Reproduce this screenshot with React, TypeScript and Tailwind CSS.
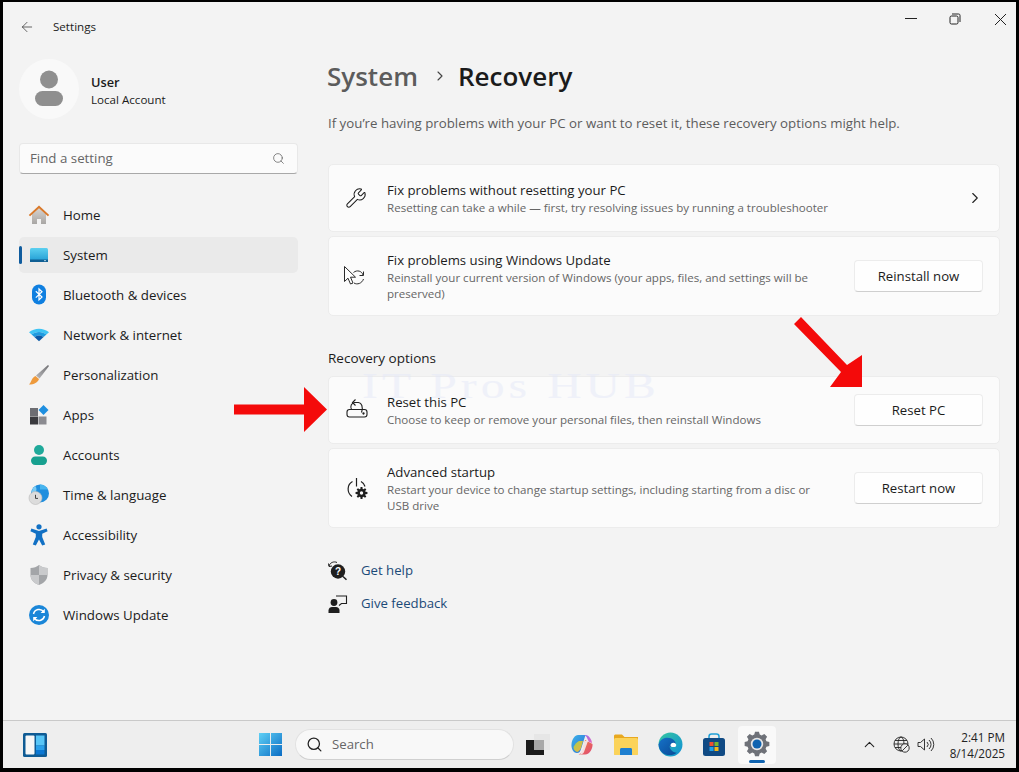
import React from "react";
import { ChevronRight, Wrench, ArrowLeft, Search, ChevronUp } from "lucide-react";

function gearPath(cx: number, cy: number, ro: number, ri: number, teeth: number) {
  const pts: string[] = [];
  const step = (Math.PI * 2) / teeth;
  for (let i = 0; i < teeth; i++) {
    const a = i * step - Math.PI / 2;
    const list: [number, number][] = [
      [ri, a - step * 0.36],
      [ro, a - step * 0.2],
      [ro, a + step * 0.2],
      [ri, a + step * 0.36],
    ];
    for (const [r, t] of list) pts.push(`${(cx + r * Math.cos(t)).toFixed(2)} ${(cy + r * Math.sin(t)).toFixed(2)}`);
  }
  return "M" + pts.join("L") + "Z";
}

const HomeIcon = () => (
  <svg width="22" height="22" viewBox="0 0 22 22">
    <defs><linearGradient id="hb" x1="0" y1="0" x2="0" y2="1"><stop offset="0" stopColor="#d8d4d0" /><stop offset="1" stopColor="#a8a6a4" /></linearGradient></defs>
    <path d="M4 10 11 4l7 6v10h-5v-5H9v5H4Z" fill="url(#hb)" />
    <path d="M0.8 11 11 1.500 21.200 11l-1.300 1.200L11 4.200 2.100 12.200Z" fill="#d9792a" />
  </svg>
);
const SystemIcon = () => (
  <svg width="22" height="22" viewBox="0 0 22 22">
    <defs><linearGradient id="sy" x1="0" y1="0" x2="0" y2="1"><stop offset="0" stopColor="#5cd0f0" /><stop offset="1" stopColor="#1e9ad2" /></linearGradient></defs>
    <rect x="2" y="4" width="18" height="14" rx="1.500" fill="url(#sy)" />
    <rect x="2" y="15.500" width="18" height="2.500" fill="#0f5f94" />
    <rect x="16" y="16.300" width="2" height="0.800" fill="#cfe8f5" />
  </svg>
);
const BluetoothIcon = () => (
  <svg width="22" height="22" viewBox="0 0 22 22">
    <rect x="4" y="0.500" width="14" height="20" rx="7" fill="#0f7fe0" />
    <path d="M7.800 7.200 14 13l-3 2.900V5l3 2.800L7.800 13.600" fill="none" stroke="#fff" strokeWidth="1.200" />
  </svg>
);
const WifiIcon = () => (
  <svg width="22" height="22" viewBox="0 0 22 22">
    <path d="M1 8.300C6.500 3.600 15.500 3.600 21 8.300L18.400 10.600C14.200 7.200 7.800 7.200 3.600 10.600Z" fill="#3ec4f4" />
    <path d="M3.600 10.600C7.800 7.200 14.200 7.200 18.400 10.600L15.600 13.100C13 11 9 11 6.400 13.100Z" fill="#1e9be0" />
    <path d="M6.400 13.100C9 11 13 11 15.600 13.100L11 17.200Z" fill="#0b5aa8" />
  </svg>
);
const BrushIcon = () => (
  <svg width="22" height="22" viewBox="0 0 22 22">
    <defs><linearGradient id="br" x1="1" y1="0" x2="0" y2="1"><stop offset="0" stopColor="#6f6f72" /><stop offset="1" stopColor="#b9b9bc" /></linearGradient></defs>
    <path d="M20 1 21 2 11.500 14.500 8 11.500Z" fill="url(#br)" />
    <path d="M7.500 12 11 15C10 18.500 6 20.500 1 20.500 3.500 18.500 3.500 13.500 7.500 12Z" fill="#ee9a3c" />
  </svg>
);
const AppsIcon = () => (
  <svg width="22" height="22" viewBox="0 0 22 22">
    <rect x="2" y="4" width="8" height="8" fill="#6d6d72" />
    <rect x="2" y="12.500" width="8" height="8" fill="#3a3a3e" />
    <rect x="10.500" y="12.500" width="8" height="8" fill="#8b8b90" />
    <path d="M15.500 1 20.500 6 15.500 11 10.500 6Z" fill="#1e8fe0" />
  </svg>
);
const AccountsIcon = () => (
  <svg width="22" height="22" viewBox="0 0 22 22">
    <circle cx="11" cy="6" r="5" fill="#1fa99a" />
    <rect x="3" y="12.500" width="16" height="8.500" rx="4.200" fill="#17a08f" />
  </svg>
);
const TimeIcon = () => (
  <svg width="22" height="22" viewBox="0 0 22 22">
    <circle cx="12" cy="9.500" r="9" fill="#1f8ede" />
    <path d="M12 .5a9 9 0 0 1 8 5h-8Z" fill="#47b4ee" />
    <path d="M7 1.800C9 4 9 7 7 9l-3 1A9 9 0 0 1 7 1.800Z" fill="#7ccbf2" />
    <circle cx="7.500" cy="14" r="6.500" fill="#dcdcdc" stroke="#b8b8b8" strokeWidth=".6" />
    <path d="M7.500 10.800V14.400H10" fill="none" stroke="#444" strokeWidth="1" />
  </svg>
);
const AccessIcon = () => (
  <svg width="22" height="22" viewBox="0 0 22 22">
    <circle cx="11" cy="2.800" r="2.600" fill="#1170c4" />
    <path d="M3.400 4.600 11 7l7.600-2.400 1 2.600-5.400 2.600V13l3 7.400-3 1.200L11 15.500l-3.200 6.100-3-1.200 3-7.400V9.800L2.400 7.200Z" fill="#1170c4" />
  </svg>
);
const ShieldIcon = () => (
  <svg width="22" height="22" viewBox="0 0 22 22">
    <path d="M11 1C8.500 3 6 4 2.500 4V11C2.500 16 6.500 19.500 11 21 15.500 19.500 19.500 16 19.500 11V4C16 4 13.500 3 11 1Z" fill="#a3a5a8" />
    <path d="M11 1C13.500 3 16 4 19.500 4V11H11ZM11 11H2.500C2.500 16 6.500 19.500 11 21Z" fill="#c9cacc" />
  </svg>
);
const UpdateIcon = () => (
  <svg width="22" height="22" viewBox="0 0 22 22">
    <circle cx="11" cy="11" r="10" fill="#1a86d8" />
    <path d="M5.500 10A5.700 5.700 0 0 1 15.700 7.800M16.500 12A5.700 5.700 0 0 1 6.300 14.200" fill="none" stroke="#fff" strokeWidth="1.500" />
    <path d="M16.800 4.800V9h-4.200ZM5.200 17.200V13h4.200Z" fill="#fff" />
  </svg>
);

const nav: [string, React.FC][] = [
  ["Home", HomeIcon],
  ["System", SystemIcon],
  ["Bluetooth & devices", BluetoothIcon],
  ["Network & internet", WifiIcon],
  ["Personalization", BrushIcon],
  ["Apps", AppsIcon],
  ["Accounts", AccountsIcon],
  ["Time & language", TimeIcon],
  ["Accessibility", AccessIcon],
  ["Privacy & security", ShieldIcon],
  ["Windows Update", UpdateIcon],
];

const CursorRefresh = () => (
  <svg className="-ml-[3px]" width="24" height="24" viewBox="0 0 24 24" fill="none" stroke="#2b2b2b" strokeWidth="1">
    <path d="M2.500 2.500V17.500L6 14.200 8.500 20 11 19 8.500 13.200H13.500Z" fill="#fff" />
    <path d="M11.500 8.500C15 5.500 20 7 21 11M21.500 15C20 19.500 15 21 12 19" />
    <path d="M21.500 7.500V11.500H17.500" />
  </svg>
);
const ResetIcon = () => (
  <svg width="24" height="24" viewBox="0 0 24 24" fill="none" stroke="#1f1f1f" strokeWidth="1.100">
    <path d="M2 14C2 12.500 3 11.500 4.500 11.500H19.500C21 11.500 22 12.500 22 14V16.500C22 18 21 19 19.500 19H4.500C3 19 2 18 2 16.500Z" />
    <path d="M6.500 11.500C4.800 8.500 6.500 5 9.500 4.500H13.500C16.500 5 18.500 8.500 16.500 14.500" />
    <path d="M10.500 1.500 7.500 4.500l3 3" />
    <circle cx="18.500" cy="15.500" r=".6" fill="#1f1f1f" />
  </svg>
);
const StartupIcon = () => (
  <svg width="24" height="24" viewBox="0 0 24 24" fill="none" stroke="#1f1f1f" strokeWidth="1.200">
    <path d="M7.500 5.500C2 8.500 1.500 16.500 7 20.500" />
    <path d="M16 5.500C18 6.500 19.500 8.500 20 10.500" />
    <path d="M11.500 2V10.500" />
    <path d={gearPath(16.500, 17, 6, 4.200, 8)} fill="#1f1f1f" stroke="none" />
    <circle cx="16.500" cy="17" r="1.700" fill="#fbfbfb" stroke="none" />
  </svg>
);
const HelpIcon = () => (
  <svg width="20" height="20" viewBox="0 0 20 20">
    <path d="M1 5C2 1.500 6 0 9 1.500M1 5.500 .5 2.500M1 5.500 4 5" fill="none" stroke="#1f1f1f" strokeWidth="1" />
    <circle cx="10" cy="10.500" r="7.200" fill="#1f1f1f" />
    <path d="M15 15.500 18.500 18.800" stroke="#1f1f1f" strokeWidth="1.500" />
    <text x="10" y="14" textAnchor="middle" fontSize="10" fontWeight="700" fill="#fff" fontFamily="'Liberation Sans', sans-serif">?</text>
  </svg>
);
const FeedbackIcon = () => (
  <svg width="20" height="20" viewBox="0 0 20 20">
    <circle cx="6" cy="8.500" r="3.400" fill="#1f1f1f" />
    <path d="M0.500 19V16.500C0.500 14 2.500 13 4 13H8C10 13 11.500 14.500 11.500 16.500V19Z" fill="#1f1f1f" />
    <path d="M8 2H18.500V9.500H13.500L11 11.500" fill="none" stroke="#1f1f1f" strokeWidth="1.100" />
  </svg>
);

const Card = ({ h, icon, title, desc, right }: { h: string; icon: React.ReactNode; title: string; desc: React.ReactNode; right: React.ReactNode }) => (
  <div className={`${h} flex items-center rounded-[5px] border border-[#ececec] bg-[#fbfbfb] pl-[16px] pr-[16px]`}>
    <div className="flex w-[42px] shrink-0 items-center">{icon}</div>
    <div className="min-w-0 flex-1 pt-[1px]">
      <div className="text-[13.200px] leading-[19px] text-[#1b1b1b]">{title}</div>
      <div className="text-[11.570px] leading-[16px] text-[#666666]">{desc}</div>
    </div>
    {right}
  </div>
);

const Btn = ({ label }: { label: string }) => (
  <div className="ml-[12px] flex h-[32px] w-[129px] shrink-0 items-center justify-center rounded-[4px] border border-[#ececec] border-b-[#cfcfcf] bg-[#fefefe] pt-[2px] text-[13.200px] text-[#1b1b1b]">{label}</div>
);

const TaskSlot = ({ children, cls = "" }: { children: React.ReactNode; cls?: string }) => (
  <div className={`flex h-[38px] w-[44px] shrink-0 items-center justify-center ${cls}`}>{children}</div>
);

export default function App() {
  return (
    <div className="relative flex h-[772px] w-[1019px] flex-col overflow-hidden bg-black pb-[4px] pl-[3px] pr-[3px] pt-[2px] text-[#1b1b1b]" style={{ fontFamily: '"Open Sans", "Noto Sans", sans-serif' }}>
      <div className="flex min-h-0 flex-1 flex-col bg-[#f3f3f3]">
        {/* title bar */}
        <div className="flex h-[50px] shrink-0 items-center pl-[16px] pr-[9px]">
          <ArrowLeft size={16} strokeWidth={1.100} className="text-[#333]" />
          <span className="ml-[18px] text-[11.600px] text-[#222]">Settings</span>
          <div className="ml-auto flex items-center gap-[33px] pb-[16px]">
            <svg className="-mr-[1px]" width="12" height="12" viewBox="0 0 12 12"><path d="M0 5.500H12" stroke="#222" strokeWidth="1" /></svg>
            <svg width="12" height="12" viewBox="0 0 12 12" fill="none" stroke="#222" strokeWidth="1"><rect x="1" y="3" width="8" height="8" rx="1.500" /><path d="M3 1H9.500C10.500 1 11 1.500 11 2.500V9" /></svg>
            <svg width="13" height="13" viewBox="0 0 13 13"><path d="M1 1 12 12M12 1 1 12" stroke="#222" strokeWidth="1" /></svg>
          </div>
        </div>

        <div className="flex min-h-0 flex-1">
          {/* sidebar */}
          <div className="w-[325px] shrink-0 pl-[16px] pr-[30px]">
            <div className="mt-[7px] flex items-center">
              <div className="flex h-[60px] w-[60px] flex-col items-center justify-center rounded-full bg-[#f9f9f9]">
                <svg width="30" height="38" viewBox="0 0 30 38"><circle cx="15" cy="9.500" r="9" fill="#8f8f8f" /><rect x="1" y="21" width="28" height="15" rx="7.500" fill="#8f8f8f" /></svg>
              </div>
              <div className="ml-[12px] pt-[3px]">
                <div className="text-[12.800px] font-semibold leading-[18px] text-[#1b1b1b]">User</div>
                <div className="text-[11.600px] leading-[18px] text-[#1b1b1b]">Local Account</div>
              </div>
            </div>
            <div className="mt-[24px] flex h-[31px] items-center justify-between rounded-[4px] border border-[#e8e8e8] border-b-[#a8a8a8] bg-[#fbfbfb] pl-[10px] pr-[12px] text-[13.300px] text-[#666]">
              <span>Find a setting</span>
              <Search size={13} strokeWidth={1.300} className="text-[#555]" />
            </div>
            <div className="mt-[23px] flex flex-col gap-[4px]">
              {nav.map(([label, Icon]) => {
                const active = label === "System";
                return (
                  <div key={label} className={`relative flex h-[36px] items-center rounded-[5px] pl-[9px] text-[13.300px] text-[#1b1b1b] ${active ? "bg-[#eaeaea]" : ""}`}>
                    {active && <span className="absolute left-0 top-[9px] h-[18px] w-[3px] rounded-full bg-[#0f5c9e]" />}
                    <Icon />
                    <span className="ml-[13px] pt-[2px]">{label}</span>
                  </div>
                );
              })}
            </div>
          </div>

          {/* main */}
          <div className="min-w-0 flex-1 pr-[16px]">
            <div className="flex h-[50px] items-center pb-[2px] text-[26px] font-semibold">
              <span className="-ml-[1px] text-[#5c5c5c]">System</span>
              <ChevronRight size={16} strokeWidth={1.700} className="ml-[14px] mr-[10px] text-[#444]" />
              <span className="text-[#1b1b1b]">Recovery</span>
            </div>
            <div className="mt-[11px] h-[20px] text-[13.280px] leading-[20px] text-[#5c5c5c]">If you’re having problems with your PC or want to reset it, these recovery options might help.</div>
            <div className="mt-[31px] flex flex-col gap-[4px]">
              <Card h="h-[68px]" icon={<Wrench size={22} strokeWidth={1.100} />} title="Fix problems without resetting your PC" desc="Resetting can take a while — first, try resolving issues by running a troubleshooter" right={<ChevronRight size={18} strokeWidth={1.500} className="-mr-[1px] text-[#222]" />} />
              <Card h="h-[80px]" icon={<CursorRefresh />} title="Fix problems using Windows Update" desc={<>Reinstall your current version of Windows (your apps, files, and settings will be<br />preserved)</>} right={<Btn label="Reinstall now" />} />
            </div>
            <div className="mt-[32px] h-[20px] text-[13.500px] font-medium leading-[20px]">Recovery options</div>
            <div className="mt-[8px] flex flex-col gap-[4px]">
              <Card h="h-[68px]" icon={<ResetIcon />} title="Reset this PC" desc="Choose to keep or remove your personal files, then reinstall Windows" right={<Btn label="Reset PC" />} />
              <Card h="h-[80px]" icon={<StartupIcon />} title="Advanced startup" desc={<>Restart your device to change startup settings, including starting from a disc or<br />USB drive</>} right={<Btn label="Restart now" />} />
            </div>
            <div className="mt-[33px] flex flex-col gap-[13px]">
              <div className="flex h-[20px] items-center text-[13.200px] text-[#1b4a78]"><HelpIcon /><span className="ml-[13px]">Get help</span></div>
              <div className="flex h-[20px] items-center text-[13.200px] text-[#1b4a78]"><FeedbackIcon /><span className="ml-[13px]">Give feedback</span></div>
            </div>
          </div>
        </div>
      </div>

      {/* taskbar */}
      <div className="flex h-[48px] shrink-0 items-center border-t border-[#c9c9c9] bg-[#eeeeee]">
        <svg className="ml-[20px]" width="24" height="24" viewBox="0 0 24 24">
          <rect width="24" height="24" rx="1.500" fill="#0f5b94" />
          <rect x="2.500" y="2.500" width="9" height="19" rx="1" fill="#f7f7f7" />
          <rect x="13" y="2.500" width="8.500" height="10" fill="#58c6f7" />
          <rect x="13" y="12.500" width="8.500" height="4.500" fill="#2aa0ea" />
          <rect x="13" y="17" width="8.500" height="4.500" fill="#0b78d4" />
        </svg>
        <svg className="ml-[212px]" width="23" height="23" viewBox="0 0 24 24">
          <defs><linearGradient id="wn" x1="0" y1="0" x2="1" y2="1"><stop offset="0" stopColor="#5fd0f5" /><stop offset="1" stopColor="#0a6cc4" /></linearGradient></defs>
          <path d="M0 0H11.500V11.500H0ZM12.500 0H24V11.500H12.500ZM0 12.500H11.500V24H0ZM12.500 12.500H24V24H12.500Z" fill="url(#wn)" />
        </svg>
        <div className="ml-[13px] flex h-[31px] w-[219px] items-center rounded-full border border-[#e2e2e2] border-b-[#d0d0d0] bg-[#f8f8f8] pl-[10px] text-[13.200px] text-[#666]">
          <Search size={17} strokeWidth={1.800} className="text-[#222]" />
          <span className="ml-[9px]">Search</span>
        </div>
        <div className="flex items-center">
          <TaskSlot cls="ml-[1px]">
            <svg width="26" height="24" viewBox="0 0 26 24">
              <rect x="2" y="7" width="18" height="15" fill="#1c1c1c" />
              <rect x="10" y="1" width="16" height="16" fill="#e6e6e6" />
              <rect x="10" y="7" width="10" height="10" fill="#a8a8a8" />
            </svg>
          </TaskSlot>
          <TaskSlot cls="ml-[1px]">
            <svg width="24" height="24" viewBox="0 0 24 24">
              <defs>
                <linearGradient id="c1" x1="0" y1="0" x2="1" y2="1"><stop offset="0" stopColor="#3db4e8" /><stop offset="1" stopColor="#2a6fd8" /></linearGradient>
                <linearGradient id="c2" x1="0" y1="0" x2="1" y2="1"><stop offset="0" stopColor="#8a6cf0" /><stop offset="1" stopColor="#e86ac0" /></linearGradient>
                <linearGradient id="c3" x1="0" y1="0" x2="1" y2="1"><stop offset="0" stopColor="#a8cf50" /><stop offset="1" stopColor="#f0b040" /></linearGradient>
                <linearGradient id="c4" x1="0" y1="0" x2="1" y2="1"><stop offset="0" stopColor="#f08040" /><stop offset="1" stopColor="#e04a78" /></linearGradient>
              </defs>
              <path d="M8 2H15.500L11 16C10 19 9 20 7 20 3 20 1 15 1.500 11 2 6 5 2 8 2Z" fill="url(#c1)" />
              <path d="M12 2C15 1.500 16.500 3 17.500 6L19 9 22 10C22 7 19 2 15.500 2Z" fill="url(#c2)" />
              <path d="M9 8 13 8 11 15C10 17 9 18.500 7 19 4.500 18 3.500 16 3.500 14 5 11 7 9 9 8Z" fill="url(#c3)" />
              <path d="M15 7 22.500 11C23 15 20 21.500 15 21.500H8.500C11 21 12 19 13 16Z" fill="url(#c4)" />
              <path d="M14.500 8H18L14 19C13.500 20.500 12 21.500 10 21.500 12 19 13.500 13 14.500 8Z" fill="#f4f4f8" opacity=".85" />
            </svg>
          </TaskSlot>
          <TaskSlot>
            <svg width="24" height="24" viewBox="0 0 24 24">
              <path d="M0 3C0 2 .8 1.500 1.500 1.500H8L10.500 4H24V20C24 21 23.400 22 22.500 22H1.500C.6 22 0 21 0 20Z" fill="#e8a820" />
              <rect y="5" width="24" height="17" rx="1.500" fill="#fbd35a" />
              <path d="M6 22V16.500C6 15.500 6.800 15 7.500 15H16.500C17.300 15 18 15.500 18 16.500V22Z" fill="#1e7fd0" />
            </svg>
          </TaskSlot>
          <TaskSlot>
            <svg width="25" height="25" viewBox="0 0 24 24">
              <defs>
                <linearGradient id="ed1" x1="0" y1="0" x2="1" y2="1"><stop offset="0" stopColor="#36c7a0" /><stop offset="1" stopColor="#0f8fd8" /></linearGradient>
                <linearGradient id="ed2" x1="0" y1="0" x2="1" y2="1"><stop offset="0" stopColor="#1672c8" /><stop offset="1" stopColor="#0a4a96" /></linearGradient>
              </defs>
              <circle cx="12" cy="12" r="11.500" fill="url(#ed1)" />
              <path d="M.5 12C2 7 6 5.500 9 5.500c5 0 8 3 8 6 0 2-1.500 3-3.500 3-1.500 0-2.500-.6-2.500-1.500 0 3 2.800 7 7 7a9 9 0 0 1-3 1.500C9 23.500 1 21 .5 12Z" fill="url(#ed2)" />
              <path d="M12 13c0-2 1.200-2.800 2.800-2.800s2.700 1 2.700 2.300c0 1.500-1 2-2.800 2-1.700 0-2.700-.5-2.700-1.500Z" fill="#fff" />
            </svg>
          </TaskSlot>
          <TaskSlot>
            <svg width="24" height="24" viewBox="0 0 24 24">
              <path d="M7 5V3.500C7 2 8 1 9.500 1H14.500C16 1 17 2 17 3.500V5" fill="none" stroke="#1fa0d8" strokeWidth="1.500" />
              <rect x="1" y="5" width="22" height="18" rx="2.500" fill="#104a84" />
              <rect x="7.500" y="9" width="4" height="4" fill="#f05030" />
              <rect x="12.500" y="9" width="4" height="4" fill="#7ab830" />
              <rect x="7.500" y="14" width="4" height="4" fill="#20a0e8" />
              <rect x="12.500" y="14" width="4" height="4" fill="#f8b818" />
            </svg>
          </TaskSlot>
          <div className="relative ml-[2px] flex h-[38px] w-[38px] items-center justify-center rounded-[4px] bg-[#f9f9f9] pb-[2px]">
            <svg width="26" height="26" viewBox="0 0 26 26">
              <path d={gearPath(13, 13, 12.500, 9.800, 8)} fill="#6e7178" />
              <circle cx="13" cy="13" r="8" fill="#6e7178" />
              <circle cx="13" cy="13" r="6.200" fill="#e6e6e6" />
              <circle cx="13" cy="13" r="4.500" fill="#0f63b0" />
            </svg>
            <span className="absolute bottom-[1px] left-[11px] h-[3px] w-[16px] rounded-full bg-[#0f63b0]" />
          </div>
        </div>
        <div className="ml-auto flex items-center pr-[11px]">
          <ChevronUp size={17} strokeWidth={1.500} className="text-[#222]" />
          <svg className="ml-[15px]" width="17" height="17" viewBox="0 0 17 17" fill="none" stroke="#222" strokeWidth=".9">
            <circle cx="8" cy="8" r="7" />
            <ellipse cx="8" cy="8" rx="3" ry="7" />
            <path d="M1 8H15M2 4.500H14M2 11.500H14" />
            <circle cx="12" cy="12" r="4.200" fill="#eeeeee" />
            <path d="M9.200 14.800 14.800 9.200" />
          </svg>
          <svg className="ml-[7px]" width="18" height="17" viewBox="0 0 18 17" fill="none" stroke="#222" strokeWidth=".9">
            <path d="M1 6.500H3.500L7.500 3V14L3.500 10.500H1Z" />
            <path d="M10 6A3.500 3.500 0 0 1 10 11M12 4A6 6 0 0 1 12 13M14 2A9 9 0 0 1 14 15" />
          </svg>
          <div className="ml-[11px] w-[59px] text-right text-[11.700px] leading-[16px] text-[#222]">
            <div>2:41 PM</div>
            <div>8/14/2025</div>
          </div>
        </div>
      </div>

      {/* annotations lying over the screenshot */}
      <div className="pointer-events-none absolute left-[362px] top-[365px] origin-left scale-x-[1.36] whitespace-nowrap text-[35px] leading-[44px] tracking-[3px] text-[#e4e8f8] opacity-50" style={{ fontFamily: '"Liberation Serif", serif' }}>IT Pros HUB</div>
      <svg className="pointer-events-none absolute left-0 top-0" width="1019" height="772" viewBox="0 0 1019 772">
        <path d="M234 404.500H304V387L327 409.500 304 432V414.500H234Z" fill="#f40a0a" />
        <path d="M794 324 801 317 847 365 862 355V387H830L841 372Z" fill="#f40a0a" />
      </svg>
    </div>
  );
}
